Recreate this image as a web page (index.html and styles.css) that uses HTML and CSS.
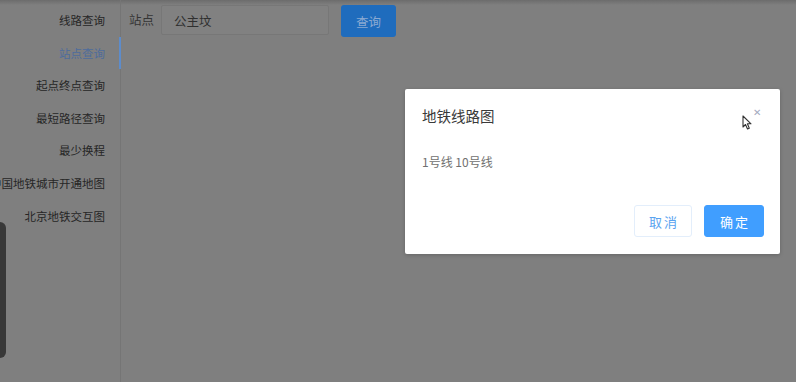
FILE: index.html
```html
<!DOCTYPE html>
<html lang="zh-CN">
<head>
    <meta charset="UTF-8">
    <meta name="viewport" content="width=device-width, initial-scale=1.0">
    <title>地铁查询</title>
    <link rel="stylesheet" href="styles.css">
</head>
<body>
    <div class="page">
        <aside class="sidebar">
            <a class="menu-item">线路查询</a>
            <a class="menu-item active">站点查询</a>
            <a class="menu-item">起点终点查询</a>
            <a class="menu-item">最短路径查询</a>
            <a class="menu-item">最少换程</a>
            <a class="menu-item">中国地铁城市开通地图</a>
            <a class="menu-item">北京地铁交互图</a>
        </aside>
        <main class="content">
            <div class="search-row">
                <label class="search-label" for="station">站点</label>
                <input id="station" class="search-input" value="公主坟">
                <button class="search-btn">查询</button>
            </div>
        </main>
    </div>

    <div class="side-tab"></div>

    <div class="dialog">
        <div class="dialog-header">
            <span class="dialog-title">地铁线路图</span>
            <span class="dialog-close">&#x2715;</span>
        </div>
        <div class="dialog-body">1号线 10号线</div>
        <div class="dialog-footer">
            <button class="btn btn-plain">取消</button>
            <button class="btn btn-primary">确定</button>
        </div>
        <svg class="cursor" width="11" height="16" viewBox="0 0 11 16">
            <path d="M1 1 L1 12 L3.5 9.5 L5.5 14 L7.3 13.2 L5.4 8.8 L9 8.8 Z" fill="#fff" stroke="#333" stroke-width="1.1" stroke-linejoin="round"/>
        </svg>
    </div>
</body>
</html>
```

FILE: styles.css
```css
* {
    box-sizing: border-box;
}
body {
    margin: 0;
    font-family: "Noto Sans CJK SC", "Noto Sans", sans-serif;
    background: linear-gradient(#6c6c6c, #7f7f7f 5px) no-repeat, #7f7f7f;
    color: #2c2c2c;
    height: 382px;
    overflow: hidden;
}
.page {
    display: flex;
    height: 382px;
}
.sidebar {
    width: 121px;
    flex-shrink: 0;
    border-right: 1px solid #757575;
    padding-top: 4px;
    display: flex;
    flex-direction: column;
}
.menu-item {
    height: 32.6px;
    line-height: 32px;
    font-size: 11.5px;
    text-align: right;
    white-space: nowrap;
    padding-right: 15px;
    color: #262626;
    direction: rtl;
}
.menu-item.active {
    color: #4d6c9c;
    border-right: 2px solid #5d8ccb;
    margin-right: -1px;
    padding-right: 14px;
}
.content {
    flex: 1;
    padding: 5px 8px;
}
.search-row {
    display: flex;
    align-items: flex-start;
}
.search-label {
    font-size: 12.5px;
    line-height: 30px;
    color: #353535;
    width: 32px;
}
.search-input {
    width: 168px;
    height: 30px;
    border: 1px solid #777;
    border-radius: 2px;
    background: #818181;
    padding: 0 12px;
    font-family: inherit;
    font-size: 12.5px;
    color: #303030;
    outline: none;
}
.search-btn {
    margin-left: 12px;
    width: 55px;
    height: 32px;
    border: none;
    border-radius: 3px;
    background: #1f6cbd;
    color: #8aa9d2;
    font-family: inherit;
    font-size: 12.5px;
}
.side-tab {
    position: absolute;
    left: 0;
    top: 222px;
    width: 6px;
    height: 136px;
    background: #383838;
    border-radius: 0 7px 7px 0;
}
.dialog {
    position: absolute;
    left: 405px;
    top: 89px;
    width: 375px;
    height: 165px;
    background: #fff;
    border-radius: 2px;
    box-shadow: 0 1px 4px rgba(0, 0, 0, 0.2);
    display: flex;
    flex-direction: column;
}
.dialog-header {
    display: flex;
    justify-content: space-between;
    padding: 17px 19px 0 17px;
}
.dialog-title {
    font-size: 14.5px;
    line-height: 20px;
    color: #3a3a3a;
}
.dialog-close {
    font-size: 10px;
    line-height: 10px;
    color: #a3aac0;
    margin-top: 1px;
}
.dialog-body {
    padding: 27px 17px 0;
    font-size: 12px;
    line-height: 18px;
    color: #707070;
}
.dialog-footer {
    display: flex;
    justify-content: flex-end;
    gap: 12px;
    padding: 34px 16px 0;
}
.btn {
    height: 32px;
    border-radius: 3px;
    font-family: inherit;
    font-size: 13px;
    letter-spacing: 2px;
    padding: 0 0 0 2px;
}
.btn-plain {
    width: 58px;
    background: #fff;
    border: 1px solid #e3eefb;
    color: #5aa3f0;
}
.btn-primary {
    width: 60px;
    background: #409eff;
    border: 1px solid #409eff;
    color: #fff;
}
.cursor {
    position: absolute;
    left: 337px;
    top: 26px;
}
```
